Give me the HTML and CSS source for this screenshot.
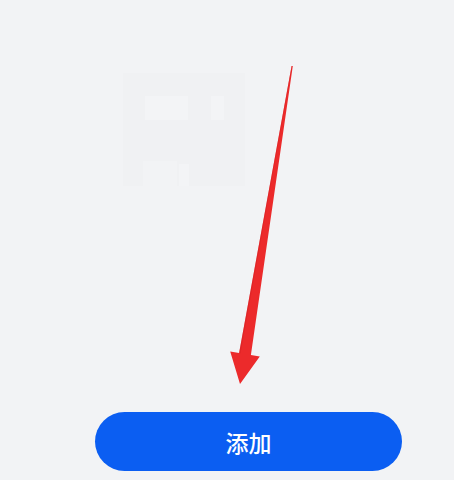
FILE: index.html
```html
<!DOCTYPE html>
<html lang="zh-CN">
<head>
<meta charset="utf-8">
<link rel="stylesheet" href="styles.css">
</head>
<body>
<div class="page">
  <div class="content">
    <svg class="ghost" width="122" height="113" viewBox="0 0 122 113">
      <rect x="0" y="0" width="122" height="113" fill="#f0f1f3"/>
      <rect x="22" y="23" width="43" height="24" fill="#f3f4f6"/>
      <rect x="88" y="23" width="13" height="24" fill="#f3f4f6"/>
      <rect x="20" y="88" width="34" height="25" fill="#f2f3f5"/>
      <rect x="56" y="91" width="10" height="22" fill="#f3f4f6"/>
    </svg>
  </div>
  <div class="footer">
    <button class="add-btn">添加</button>
  </div>
  <svg class="arrow" width="454" height="480" viewBox="0 0 454 480">
    <polygon points="291.6,66 292.8,66 250.9,355 259.8,356.4 240,384 230.2,351.6 239.1,353" fill="#ec2a2b"/>
    <polygon points="291.6,66 239.1,353 240.5,353.3 292.2,66" fill="#d42024" opacity="0.5"/>
  </svg>
</div>
</body>
</html>
```
FILE: styles.css
```css
html, body {
  margin: 0;
  padding: 0;
  background: #f2f3f5;
  font-family: "Noto Sans CJK SC", "Noto Sans", sans-serif;
}
.page {
  position: relative;
  width: 454px;
  height: 480px;
  display: flex;
  flex-direction: column;
  overflow: hidden;
}
.content {
  flex: 1;
  padding: 73px 0 0 123px;
}
.ghost {
  display: block;
}
.footer {
  display: flex;
  padding: 0 52px 9px 95px;
}
.add-btn {
  flex: 1;
  height: 59px;
  border: none;
  border-radius: 30px;
  background: #0b5ef2;
  color: #ffffff;
  font-family: "Noto Sans CJK SC", "Noto Sans", sans-serif;
  font-size: 23px;
  font-weight: 500;
  letter-spacing: 0;
  padding: 0;
}
.arrow {
  position: absolute;
  left: 0;
  top: 0;
  pointer-events: none;
}
```
